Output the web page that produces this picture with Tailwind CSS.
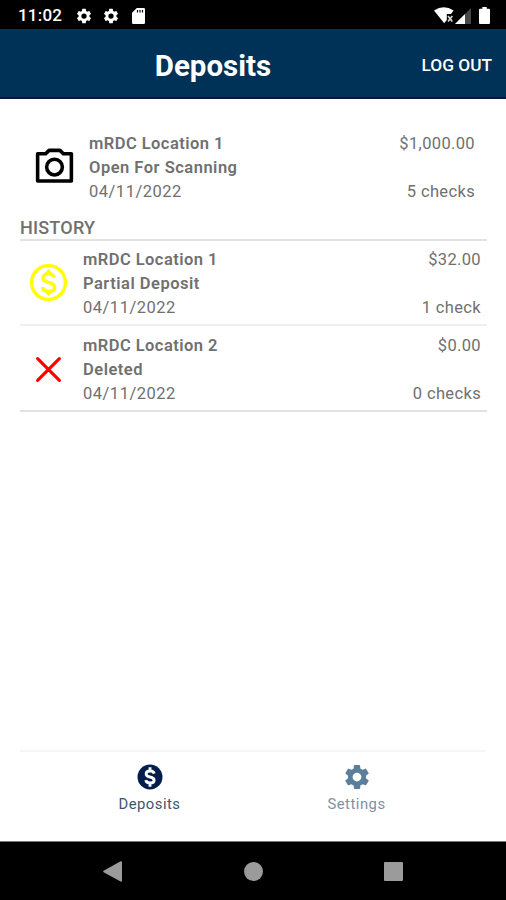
<!DOCTYPE html>
<html lang="en">
<head>
    <meta charset="UTF-8">
    <meta name="viewport" content="width=device-width, initial-scale=1.0">
    <title>Deposits</title>
    <script src="https://cdn.jsdelivr.net/npm/@tailwindcss/browser@4"></script>
</head>
<body class="h-screen overflow-hidden flex flex-col bg-white font-[Roboto,sans-serif] text-[#707070]">
    <!-- Shared icon shapes -->
    <svg class="hidden">
        <symbol id="gear" viewBox="0 0 24 24">
            <path d="M19.14 12.94c.04-.3.06-.61.06-.94 0-.32-.02-.64-.07-.94l2.03-1.58a.49.49 0 0 0 .12-.61l-1.92-3.32a.49.49 0 0 0-.59-.22l-2.39.96c-.5-.38-1.03-.7-1.62-.94L14.4 2.81a.48.48 0 0 0-.48-.41h-3.84a.47.47 0 0 0-.47.41l-.36 2.54c-.59.24-1.13.57-1.62.94l-2.39-.96a.48.48 0 0 0-.59.22L2.74 8.87a.47.47 0 0 0 .12.61l2.03 1.58c-.05.3-.09.63-.09.94s.02.64.07.94l-2.03 1.58a.49.49 0 0 0-.12.61l1.92 3.32c.12.22.37.29.59.22l2.39-.96c.5.38 1.03.7 1.62.94l.36 2.54c.05.24.24.41.48.41h3.84c.24 0 .44-.17.47-.41l.36-2.54c.59-.24 1.13-.56 1.62-.94l2.39.96c.22.08.47 0 .59-.22l1.92-3.32a.47.47 0 0 0-.12-.61zM12 15.5a3.5 3.5 0 1 1 0-7 3.5 3.5 0 0 1 0 7z" fill="currentColor"/>
        </symbol>
    </svg>

    <!-- Status bar -->
    <div class="h-[29px] shrink-0 bg-black text-white flex items-center pt-[2px] pl-[18px] pr-[16px]">
        <span class="w-[45px] text-[17px] leading-none font-medium tracking-[0.2px]">11:02</span>
        <svg class="ml-[12px] size-[18px]"><use href="#gear"/></svg>
        <svg class="ml-[9px] size-[18px]"><use href="#gear"/></svg>
        <svg class="ml-[12px] w-[13px] h-[16px]" viewBox="0 0 13 16" fill="currentColor">
            <path fill-rule="evenodd" d="M4.8 0H11.8Q13 0 13 1.2V14.8Q13 16 11.8 16H1.2Q0 16 0 14.8V4.8zM4.9 2V4.6H6.1V2zM7.4 2V4.6H8.6V2zM9.9 2V4.6H11.1V2z"/>
        </svg>
        <svg class="ml-auto w-[20px] h-[17px]" viewBox="0 0 20 17">
            <path d="M0 3.4Q9.8-3.1 19.6 3.4L17 7H12.8V13L10.2 16.3z" fill="#fff"/>
            <path d="M14 9L18.3 14.4M18.3 9L14 14.4" stroke="#ddd" stroke-width="1.6"/>
        </svg>
        <svg class="ml-[1px] w-[16px] h-[16px]" viewBox="0 0 16 16">
            <path d="M0 16L16 0V16z" fill="#484848"/>
            <path d="M0 16L10 6V16z" fill="#fff"/>
        </svg>
        <svg class="ml-[8px] w-[11px] h-[17px]" viewBox="0 0 11 17" fill="#fff">
            <path d="M3.3 0H7.7V1.8H10Q11 1.8 11 2.8V16Q11 17 10 17H1Q0 17 0 16V2.8Q0 1.8 1 1.8H3.3z"/>
        </svg>
    </div>

    <!-- App header -->
    <header class="h-[70px] shrink-0 grid grid-cols-[1fr_auto_1fr] items-center bg-[#003156] border-b-2 border-[#08163f] text-white">
        <h1 class="col-start-2 -translate-x-[40px] text-[29.5px] leading-none font-bold pt-[7px]">Deposits</h1>
        <button class="justify-self-end mr-[14px] pt-[5px] text-[17.3px] leading-none font-medium">LOG OUT</button>
    </header>

    <main class="grow pl-5 pr-[19px] pt-[33px] text-[16.5px] leading-6 tracking-[0.5px]">
        <div class="flex items-center pl-[12px] pr-[12px]">
            <svg class="mb-[3px] size-[45px]" viewBox="0 0 24 24" fill="none" stroke="#000" stroke-width="1.9" stroke-linejoin="round">
                <path d="M3 5.2H7.3L9.1 3.4H14.9L16.7 5.2H21V19.7H3z"/>
                <circle cx="12" cy="12.3" r="4.2"/>
            </svg>
            <div class="ml-[12px]">
                <p class="font-semibold tracking-[0.45px]">mRDC Location 1</p>
                <p class="font-semibold">Open For Scanning</p>
                <p>04/11/2022</p>
            </div>
            <div class="ml-auto h-[72px] flex flex-col justify-between text-right tracking-[0.35px]">
                <p>$1,000.00</p>
                <p>5 checks</p>
            </div>
        </div>

        <h2 class="mt-3 h-[25px] border-b-2 border-[#e2e2e2] text-[18px] leading-6 tracking-[0.2px] font-medium">HISTORY</h2>

        <div class="h-[85px] flex items-center pl-[6px] pr-[6px] border-b-2 border-[#efefef]">
            <svg class="size-[45px]" viewBox="0 0 24 24" fill="none" stroke="#ff0" stroke-width="1.8">
                <circle cx="12" cy="12" r="9"/>
                <path d="M15.2 9.4C14.8 8 13.6 7.4 12.1 7.4C10.3 7.4 9 8.3 9 9.6C9 11 10.1 11.5 12 12C14.2 12.5 15.3 13.2 15.3 14.6C15.3 16 14 16.7 12.1 16.7C10.3 16.7 9.1 16 8.8 14.5" stroke-width="1.8"/>
                <path d="M12 4.8L14.5 7.6H9.5zM12 19.2L9.5 16.5H14.5z" fill="#ff0" stroke="none"/>
            </svg>
            <div class="ml-[12px] pt-[3px]">
                <p class="font-semibold tracking-[0.45px]">mRDC Location 1</p>
                <p class="font-semibold">Partial Deposit</p>
                <p>04/11/2022</p>
            </div>
            <div class="ml-auto h-[75px] pt-[3px] flex flex-col justify-between text-right tracking-[0.35px]">
                <p>$32.00</p>
                <p>1 check</p>
            </div>
        </div>

        <div class="h-[86px] flex items-center pl-[6px] pr-[6px] border-b-2 border-[#e2e2e2]">
            <svg class="mt-[2px] size-[45px]" viewBox="0 0 24 24" fill="none" stroke="#f00" stroke-width="1.7" stroke-linecap="round">
                <path d="M6.2 6.2L17.8 17.8M17.8 6.2L6.2 17.8"/>
            </svg>
            <div class="ml-[12px] pt-[3px]">
                <p class="font-semibold tracking-[0.45px]">mRDC Location 2</p>
                <p class="font-semibold">Deleted</p>
                <p>04/11/2022</p>
            </div>
            <div class="ml-auto h-[75px] pt-[3px] flex flex-col justify-between text-right tracking-[0.35px]">
                <p>$0.00</p>
                <p>0 checks</p>
            </div>
        </div>
    </main>

    <!-- Tabs -->
    <nav class="h-[91px] shrink-0 mx-5 px-[26px] grid grid-cols-2 border-t-2 border-[#f6f6f6] text-[14.8px] leading-5 tracking-[0.5px]">
        <a class="flex flex-col items-center pt-[10px] text-[#3c566f]">
            <svg class="size-[30px]" viewBox="0 0 24 24" fill="none">
                <circle cx="12" cy="12" r="10" fill="#041d4d"/>
                <path d="M15.3 9.3C15 7.9 13.8 7.2 12.1 7.2C10.2 7.2 8.9 8.1 8.9 9.5C8.9 11 10.2 11.5 12 12C14.1 12.5 15.3 13.2 15.3 14.6C15.3 16 14 16.8 12.1 16.8C10.2 16.8 8.9 16 8.6 14.5M12 4.2V7.5M12 16.5V19.8" stroke="#fff" stroke-width="2.3"/>
            </svg>
            <span class="mt-[2px]">Deposits</span>
        </a>
        <a class="flex flex-col items-center pt-[10px] text-[#7d91a5]">
            <svg class="size-[30px] text-[#5b7f9b]"><use href="#gear"/></svg>
            <span class="mt-[2px]">Settings</span>
        </a>
    </nav>

    <!-- System navigation -->
    <div class="h-[59px] shrink-0 bg-black border-t border-[#777] grid grid-cols-[1fr_auto_1fr] items-center">
        <svg class="justify-self-end mr-[122px] w-[19px] h-[21px]" viewBox="0 0 19 21" fill="#9b9b9b">
            <path d="M.6 9.8L17.6.2Q19 0 19 1.2V19.8Q19 21 17.6 20.6L.6 11.2Q-.4 10.5.6 9.8z"/>
        </svg>
        <div class="size-[19px] rounded-full bg-[#9b9b9b]"></div>
        <div class="ml-[121px] size-[19px] rounded-[1px] bg-[#9b9b9b]"></div>
    </div>
</body>
</html>
